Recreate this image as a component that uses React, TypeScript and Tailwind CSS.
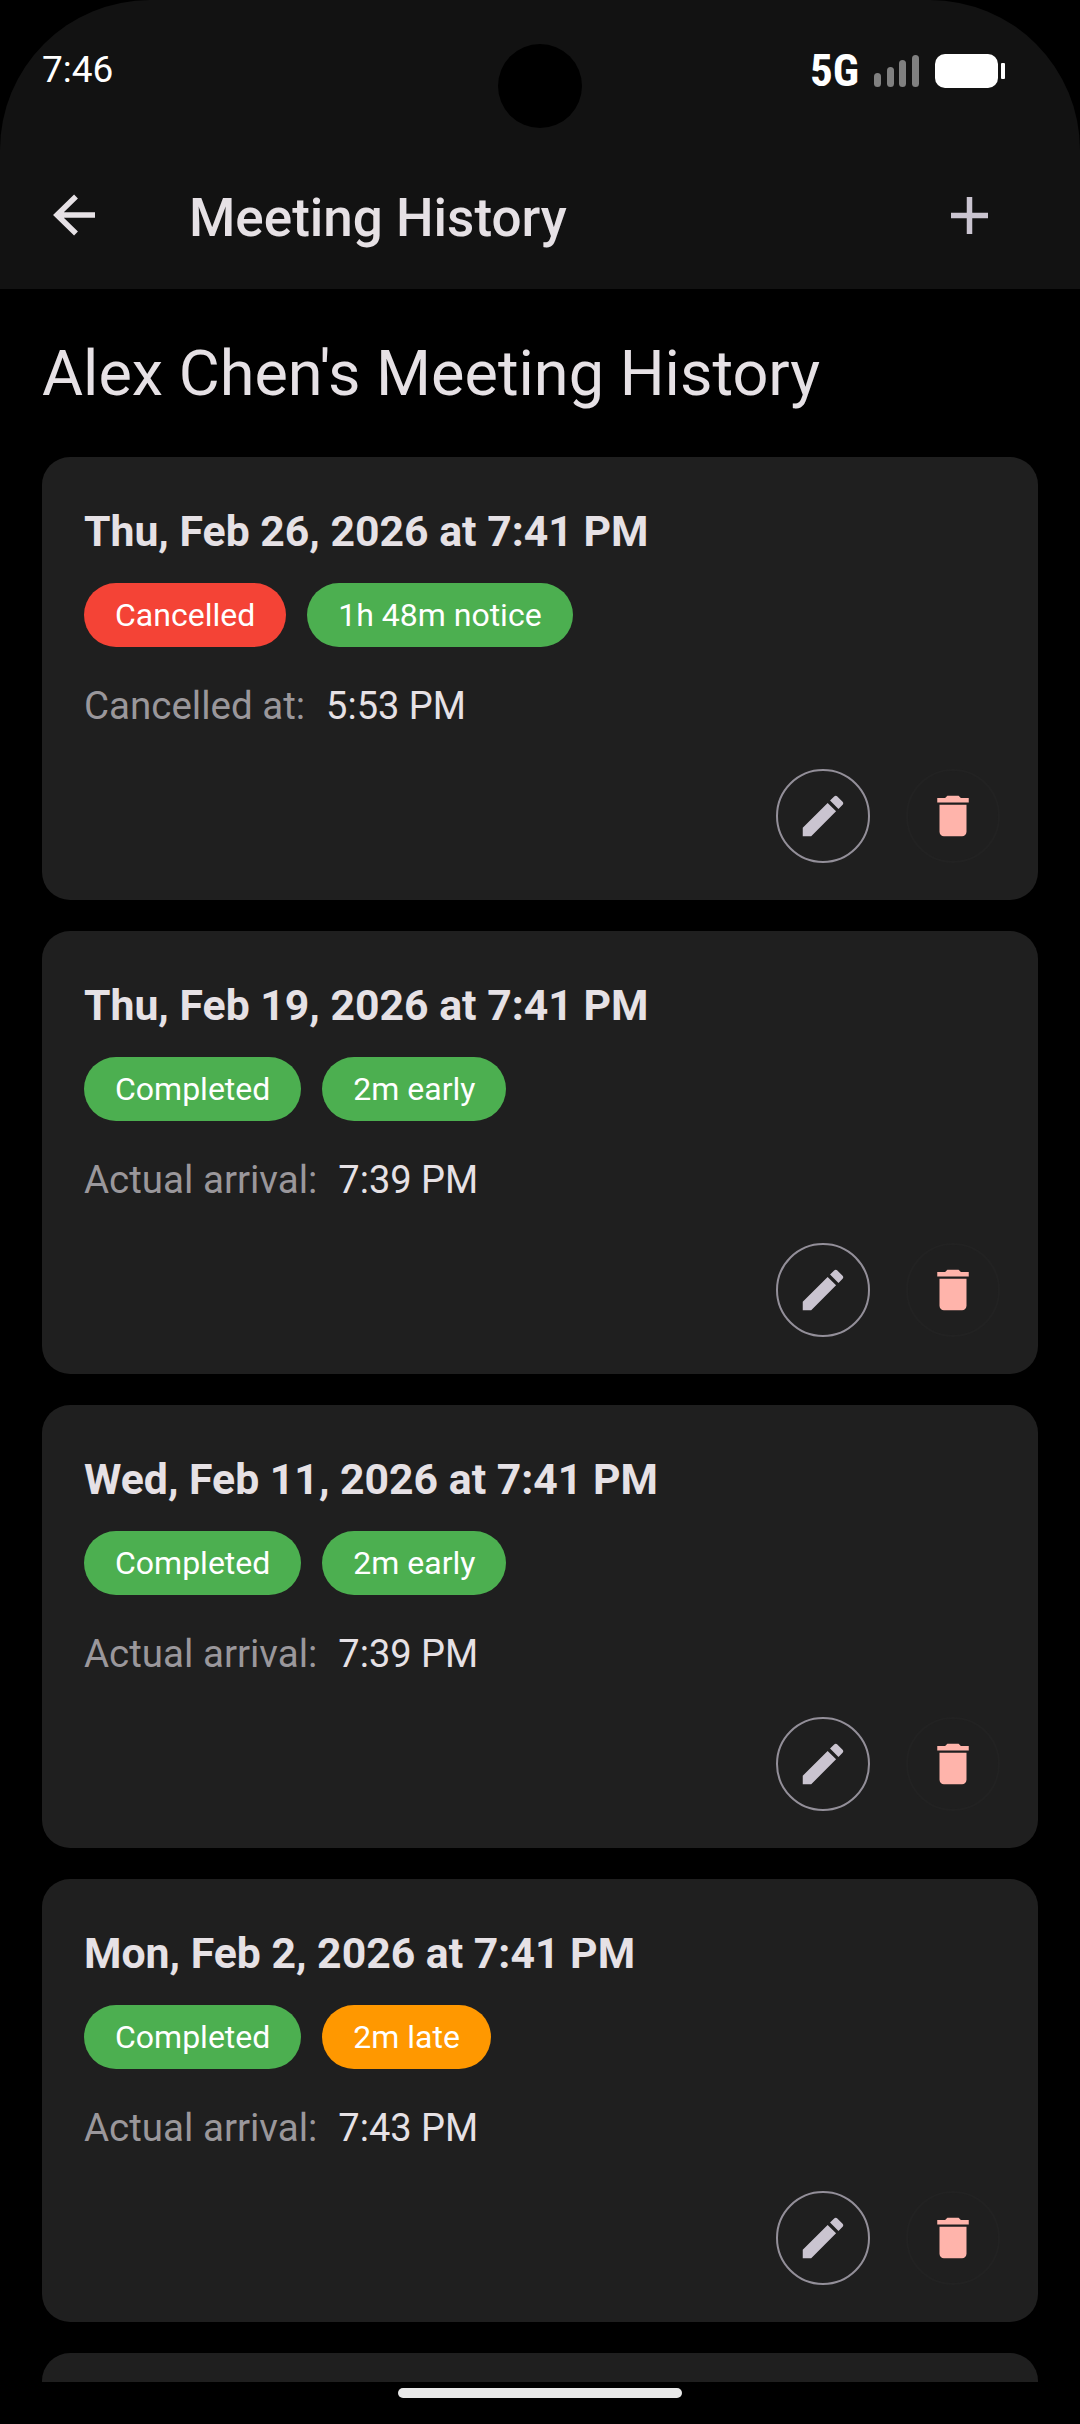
import React from "react"

const roboto = { fontFamily: "Roboto, sans-serif" }

const meetings = [
    {
        date: "Thu, Feb 26, 2026 at 7:41 PM",
        status: "Cancelled",
        statusColor: "bg-[#f44336]",
        note: "1h 48m notice",
        noteColor: "bg-[#4caf50]",
        label: "Cancelled at:",
        time: "5:53 PM",
    },
    {
        date: "Thu, Feb 19, 2026 at 7:41 PM",
        status: "Completed",
        statusColor: "bg-[#4caf50]",
        note: "2m early",
        noteColor: "bg-[#4caf50]",
        label: "Actual arrival:",
        time: "7:39 PM",
    },
    {
        date: "Wed, Feb 11, 2026 at 7:41 PM",
        status: "Completed",
        statusColor: "bg-[#4caf50]",
        note: "2m early",
        noteColor: "bg-[#4caf50]",
        label: "Actual arrival:",
        time: "7:39 PM",
    },
    {
        date: "Mon, Feb 2, 2026 at 7:41 PM",
        status: "Completed",
        statusColor: "bg-[#4caf50]",
        note: "2m late",
        noteColor: "bg-[#ff9800]",
        label: "Actual arrival:",
        time: "7:43 PM",
    },
]

const Pill = ({ text, color }: { text: string; color: string }) => (
    <span className={`${color} h-[64px] px-[31px] rounded-full flex items-center text-white text-[32px]`}>
        {text}
    </span>
)

const MeetingCard = ({ meeting }: { meeting: (typeof meetings)[number] }) => (
    <div className="bg-[#1f1f1f] rounded-[28px] h-[443px] shrink-0 pt-[49px] pl-[42px] pr-[38px] flex flex-col">
        <div className="text-[#e6e1e5] text-[42.75px] leading-[50px] font-bold">{meeting.date}</div>
        <div className="flex gap-[21px] mt-[27px]">
            <Pill text={meeting.status} color={meeting.statusColor} />
            <Pill text={meeting.note} color={meeting.noteColor} />
        </div>
        <div className="flex items-baseline gap-[21px] mt-[36px] text-[38.5px] leading-[45px]">
            <span className="text-[#9a979b]">{meeting.label}</span>
            <span className="text-[#e6e1e5] text-[38px]">{meeting.time}</span>
        </div>
        <div className="flex justify-end gap-[36px] mt-[40px]">
            <button className="w-[94px] h-[94px] rounded-full border-2 border-[#938f99] flex items-center justify-center">
                <svg width="54" height="54" viewBox="0 0 24 24" fill="#cac4d0">
                    <path d="M3 17.25V21h3.75L17.81 9.94l-3.75-3.75L3 17.25zM20.71 7.04c.39-.39.39-1.02 0-1.41l-2.34-2.34c-.39-.39-1.02-.39-1.41 0l-1.83 1.83 3.75 3.75 1.83-1.83z" />
                </svg>
            </button>
            <button className="w-[94px] h-[94px] rounded-full border-2 border-[#222222] flex items-center justify-center">
                <svg width="54" height="54" viewBox="0 0 24 24" fill="#ffb4ab">
                    <path d="M6 19c0 1.1.9 2 2 2h8c1.1 0 2-.9 2-2V7H6v12zM19 4h-3.5l-1-1h-5l-1 1H5v2h14V4z" />
                </svg>
            </button>
        </div>
    </div>
)

export default function App() {
    return (
        <div className="w-[1080px] h-[2424px] bg-black overflow-hidden flex flex-col" style={roboto}>
            <header className="relative h-[289px] shrink-0 bg-[#121212] rounded-t-[150px] pl-[42px]">
                <div className="h-[186px] flex items-start justify-between pt-[46px]">
                    <span className="text-white text-[37px] leading-[48px]">7:46</span>
                    <div className="flex items-center pr-[75px] pt-[8px]">
                        <span className="text-white text-[45px] leading-[34px] font-bold [font-stretch:75%]">5G</span>
                        <svg width="46" height="32" viewBox="0 0 46 32" fill="#808080" className="ml-[15px]">
                            <rect x="0" y="18" width="7" height="14" rx="3.5" />
                            <rect x="13" y="12" width="7" height="20" rx="3.5" />
                            <rect x="25" y="5" width="7" height="27" rx="3.5" />
                            <rect x="38" y="0" width="7" height="32" rx="3.5" />
                        </svg>
                        <svg width="70" height="34" viewBox="0 0 70 34" fill="#ffffff" className="ml-[15px]">
                            <rect x="0" y="0" width="63" height="34" rx="10" />
                            <rect x="66" y="9" width="4" height="16" rx="1" />
                        </svg>
                    </div>
                </div>
                <div className="absolute left-[498px] top-[44px] w-[84px] h-[84px] rounded-full bg-black" />
                <div className="flex items-center h-[60px] -mt-[1px]">
                    <svg width="42" height="42" viewBox="0 0 42 42" fill="none" stroke="#e6e1e5" strokeWidth="5.5" className="ml-[11px]">
                        <path d="M42 21H4M23 2.5 4 21l19 18.5" />
                    </svg>
                    <span className="text-[#e6e1e5] text-[53px] ml-[94px] font-medium pt-[7px]">Meeting History</span>
                    <svg width="37" height="37" viewBox="0 0 37 37" fill="none" stroke="#cac4d0" strokeWidth="5.5" className="ml-auto mr-[92px]">
                        <path d="M18.5 0v37M0 18.5h37" />
                    </svg>
                </div>
            </header>
            <main className="h-[2093px] shrink-0 overflow-hidden px-[42px]">
                <h1 className="text-[#e6e1e5] text-[63px] leading-[84px] mt-[43px] mb-[41px]">Alex Chen's Meeting History</h1>
                <div className="flex flex-col gap-[31px]">
                    {meetings.map((meeting) => (
                        <MeetingCard key={meeting.date} meeting={meeting} />
                    ))}
                    <div className="bg-[#1f1f1f] rounded-[28px] h-[443px] shrink-0" />
                </div>
            </main>
            <div className="flex justify-center pt-[6px]">
                <div className="w-[284px] h-[10px] rounded-full bg-[#e8e8e8]" />
            </div>
        </div>
    )
}
